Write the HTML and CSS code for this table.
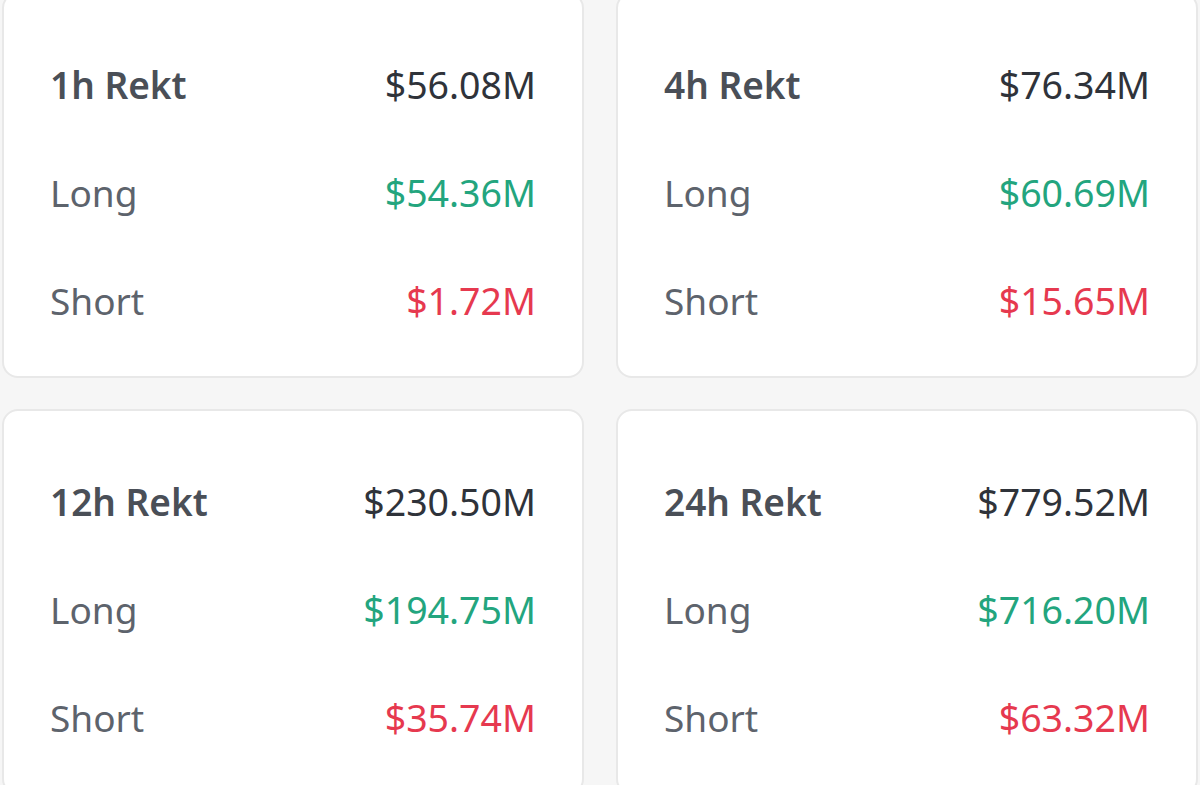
FILE: index.html
```html
<!DOCTYPE html>
<html>
<head>
<meta charset="utf-8">
<link rel="stylesheet" href="styles.css">
</head>
<body>
<div class="grid">
  <div class="card">
    <div class="row"><span class="title">1h Rekt</span><span class="val">$56.08M</span></div>
    <div class="row"><span class="label">Long</span><span class="val long">$54.36M</span></div>
    <div class="row"><span class="label">Short</span><span class="val short">$1.72M</span></div>
  </div>
  <div class="card">
    <div class="row"><span class="title">4h Rekt</span><span class="val">$76.34M</span></div>
    <div class="row"><span class="label">Long</span><span class="val long">$60.69M</span></div>
    <div class="row"><span class="label">Short</span><span class="val short">$15.65M</span></div>
  </div>
  <div class="card">
    <div class="row"><span class="title">12h Rekt</span><span class="val">$230.50M</span></div>
    <div class="row"><span class="label">Long</span><span class="val long">$194.75M</span></div>
    <div class="row"><span class="label">Short</span><span class="val short">$35.74M</span></div>
  </div>
  <div class="card">
    <div class="row"><span class="title">24h Rekt</span><span class="val">$779.52M</span></div>
    <div class="row"><span class="label">Long</span><span class="val long">$716.20M</span></div>
    <div class="row"><span class="label">Short</span><span class="val short">$63.32M</span></div>
  </div>
</div>
</body>
</html>
```

FILE: styles.css
```css
html, body {
  margin: 0;
  padding: 0;
  background: #f6f6f6;
  overflow: hidden;
}
body {
  font-family: "Noto Sans", "Liberation Sans", sans-serif;
}
.grid {
  display: grid;
  grid-template-columns: 1fr 1fr;
  column-gap: 32px;
  row-gap: 31px;
  padding: 0 2px;
  margin-top: -8px;
}
.card {
  background: #ffffff;
  border: 2px solid #e8e8e8;
  border-radius: 16px;
  padding: 54px 46px 40px 46px;
  display: flex;
  flex-direction: column;
  gap: 36px;
}
.row {
  height: 72px;
  display: flex;
  justify-content: space-between;
  align-items: center;
}
.title {
  font-size: 37px;
  font-weight: 600;
  color: #4a4f57;
}
.label {
  font-size: 37px;
  color: #5d636c;
}
.val {
  font-size: 37.5px;
  color: #2f333a;
}
.long { color: #23a57e; }
.short { color: #e6394f; }
```
